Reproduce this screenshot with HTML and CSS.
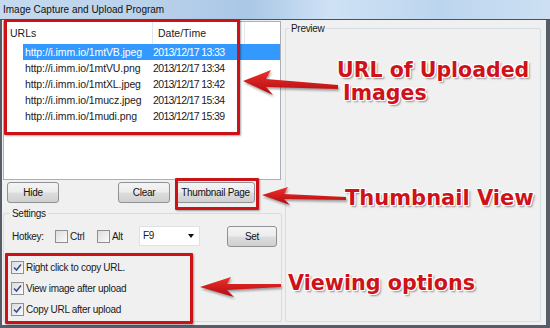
FILE: index.html
```html
<!doctype html>
<html lang="en">
<head>
	<meta charset="UTF-8">
	<title>Image Capture and Upload Program</title>
	<link rel="stylesheet" href="styles.css">
</head>
<body>
<div class="window">
	<div class="titlebar">Image Capture and Upload Program</div>
	<div class="client">
		<div class="left">
			<div class="listbox">
				<div class="lv-head">
					<span class="h-url">URLs</span>
					<span class="h-date">Date/Time</span>
					<span class="h-rest"></span>
				</div>
				<div class="lv-row sel"><span class="c-url">http://i.imm.io/1mtVB.jpeg</span><span class="c-date">2013/12/17 13:33</span></div>
				<div class="lv-row"><span class="c-url">http://i.imm.io/1mtVU.png</span><span class="c-date">2013/12/17 13:34</span></div>
				<div class="lv-row"><span class="c-url">http://i.imm.io/1mtXL.jpeg</span><span class="c-date">2013/12/17 13:42</span></div>
				<div class="lv-row"><span class="c-url">http://i.imm.io/1mucz.jpeg</span><span class="c-date">2013/12/17 15:34</span></div>
				<div class="lv-row"><span class="c-url">http://i.imm.io/1mudi.png</span><span class="c-date">2013/12/17 15:39</span></div>
			</div>
			<div class="buttons">
				<div class="btn b-hide">Hide</div>
				<div class="btn b-clear">Clear</div>
				<div class="btn b-thumb">Thumbnail Page</div>
			</div>
			<div class="group settings">
				<span class="legend">Settings</span>
				<div class="hotkey">
					<span class="hk-label">Hotkey:</span>
					<span class="check"></span><span class="ck-text">Ctrl</span>
					<span class="check"></span><span class="ck-text">Alt</span>
					<div class="combo">F9<span class="caret"></span></div>
					<div class="btn b-set">Set</div>
				</div>
				<div class="options">
					<div class="opt"><span class="check on"><svg viewBox="0 0 9 9" width="9" height="9"><path d="M1 4.5 L3.5 7 L8 1.5" fill="none" stroke="#3a4f8c" stroke-width="1.6"/></svg></span>Right click to copy URL.</div>
					<div class="opt"><span class="check on"><svg viewBox="0 0 9 9" width="9" height="9"><path d="M1 4.5 L3.5 7 L8 1.5" fill="none" stroke="#3a4f8c" stroke-width="1.6"/></svg></span>View image after upload</div>
					<div class="opt"><span class="check on"><svg viewBox="0 0 9 9" width="9" height="9"><path d="M1 4.5 L3.5 7 L8 1.5" fill="none" stroke="#3a4f8c" stroke-width="1.6"/></svg></span>Copy URL after upload</div>
				</div>
			</div>
		</div>
		<div class="group preview">
			<span class="legend">Preview</span>
		</div>
	</div>

	<!-- annotations drawn over the screenshot -->
	<div class="mark m-list"></div>
	<div class="mark m-thumb"></div>
	<div class="mark m-opts"></div>
	<svg class="arrows" width="550" height="328" viewBox="0 0 550 328">
		<defs>
			<linearGradient id="red" x1="0" y1="0" x2="0" y2="1">
				<stop offset="0" stop-color="#f0302a"/>
				<stop offset="1" stop-color="#b00a10"/>
			</linearGradient>
		</defs>
		<polygon points="243,81 271,70 266,79 338,85 338,89 266,87 273,95" fill="url(#red)"/>
		<polygon points="262,195 288,187 284,194 346,197 346,200 284,199 290,205" fill="url(#red)"/>
		<polygon points="200,287 231,277 227,284 281,284 281,287 227,290 234,297" fill="url(#red)"/>
	</svg>
	<div class="note n-url">URL of Uploaded</div>
	<div class="note n-img">Images</div>
	<div class="note n-thumb">Thumbnail View</div>
	<div class="note n-view">Viewing options</div>
</div>
</body>
</html>
```

FILE: styles.css
```css
body
{
	margin: 0;
	background-color: #ffffff;
}

.window
{
	position: relative;
	width: 550px;
	height: 328px;
	display: flex;
	flex-direction: column;
	background-color: #565d66;
	font-family: "Liberation Sans", Arial, sans-serif;
	font-size: 10px;
	color: #1a1a1a;
	overflow: hidden;
	white-space: nowrap;
}

.titlebar
{
	height: 19px;
	line-height: 19px;
	padding-left: 3px;
	border-bottom: 1px solid #4a5158;
	background: linear-gradient(to right, #c6daef 0%, #b7d0ea 30%, #a9c7e6 45%, #cfe2f5 60%, #bcd5ee 80%, #cde0f3 100%);
	color: #111111;
}

.client
{
	flex: 1;
	display: flex;
	margin: 0 4px 3px 2px;
	background-color: #f0f0f0;
	letter-spacing: -0.3px;
}

.left
{
	width: 280px;
	display: flex;
	flex-direction: column;
}

.listbox
{
	margin: 1px 0 0 1px;
	width: 276px;
	height: 157px;
	background-color: #ffffff;
	border: 1px solid #aab0b8;
	font-size: 10.5px;
	letter-spacing: 0;
}

.lv-head
{
	display: flex;
	height: 22px;
	line-height: 22px;
}

.lv-head span
{
	border-right: 1px solid #e3e6ea;
}

.h-url
{
	width: 142px;
	padding-left: 6px;
}

.h-date
{
	width: 86px;
	padding-left: 5px;
}

.h-rest
{
	flex: 1;
	border-right: none !important;
}

.lv-row
{
	display: flex;
	height: 16px;
	line-height: 16px;
	margin-left: 19px;
}

.lv-row.sel
{
	background-color: #3399ff;
	color: #ffffff;
}

.c-url
{
	width: 128px;
	padding-left: 2px;
	letter-spacing: -0.1px;
}

.c-date
{
	letter-spacing: -0.65px;
}

.buttons
{
	display: flex;
	height: 21px;
	margin-top: 2px;
}

.btn
{
	height: 19px;
	line-height: 19px;
	text-align: center;
	border: 1px solid #8e9297;
	border-radius: 3px;
	background: linear-gradient(#f4f4f4 0%, #ececec 48%, #dddddd 52%, #cfcfcf 100%);
	color: #111111;
}

.b-hide
{
	width: 50px;
	margin-left: 5px;
}

.b-clear
{
	width: 50px;
	margin-left: 59px;
}

.b-thumb
{
	width: 77px;
	margin-left: 6px;
}

.group
{
	position: relative;
	border: 1px solid #d5dce2;
	border-radius: 2px;
}

.legend
{
	position: absolute;
	top: -8px;
	left: 5px;
	padding: 0 2px;
	line-height: 15px;
	background-color: #f0f0f0;
}

.settings
{
	flex: 1;
	margin: 10px 0 3px 1px;
}

.settings .legend
{
	left: 6px;
}

.hotkey
{
	display: flex;
	align-items: center;
	height: 20px;
	margin-top: 12px;
	padding-left: 8px;
}

.hk-label
{
	width: 43px;
}

.check
{
	display: inline-flex;
	align-items: center;
	justify-content: center;
	width: 11px;
	height: 11px;
	border: 1px solid #8f8f8f;
	background: linear-gradient(135deg, #dcdcdc, #fbfbfb);
	margin-right: 2px;
}

.ck-text
{
	width: 27px;
}

.combo
{
	position: relative;
	width: 56px;
	height: 18px;
	line-height: 18px;
	padding-left: 3px;
	background-color: #ffffff;
	border: 1px solid #e1e1e1;
}

.caret
{
	position: absolute;
	right: 5px;
	top: 7px;
	border: 3px solid transparent;
	border-top: 4px solid #111111;
}

.b-set
{
	width: 48px;
	margin-left: 27px;
}

.options
{
	margin-top: 11px;
	padding-left: 7px;
}

.opt
{
	display: flex;
	align-items: center;
	height: 21px;
	line-height: 21px;
}

.check.on
{
	margin-right: 2px;
}

.preview
{
	flex: 1;
	margin: 8px 5px 3px 3px;
}

.preview .legend
{
	left: 3px;
}

.mark
{
	position: absolute;
	border: 3px solid #cc1216;
	border-radius: 1px;
	box-shadow: 1px 1px 2px rgba(0, 0, 0, .35);
}

.m-list
{
	left: 4px;
	top: 19px;
	width: 230px;
	height: 110px;
}

.m-thumb
{
	left: 175px;
	top: 178px;
	width: 78px;
	height: 26px;
}

.m-opts
{
	left: 5px;
	top: 253px;
	width: 182px;
	height: 65px;
}

.arrows
{
	position: absolute;
	left: 0;
	top: 0;
	filter: drop-shadow(1px 2px 1px rgba(0, 0, 0, .35));
}

.note
{
	position: absolute;
	font-family: "DejaVu Sans", Verdana, sans-serif;
	font-weight: bold;
	font-size: 20.5px;
	line-height: 24px;
	color: #cf1219;
	text-shadow:
		1px 0 0 #fff, -1px 0 0 #fff, 0 1px 0 #fff, 0 -1px 0 #fff,
		1px 1px 0 #fff, -1px -1px 0 #fff, 1px -1px 0 #fff, -1px 1px 0 #fff,
		2px 2px 2px rgba(0, 0, 0, .4);
}

.n-url
{
	left: 337px;
	top: 58px;
}

.n-img
{
	left: 343px;
	top: 81px;
}

.n-thumb
{
	left: 345px;
	top: 186px;
	font-size: 21px;
}

.n-view
{
	left: 288px;
	top: 271px;
	font-size: 20.7px;
}
```
